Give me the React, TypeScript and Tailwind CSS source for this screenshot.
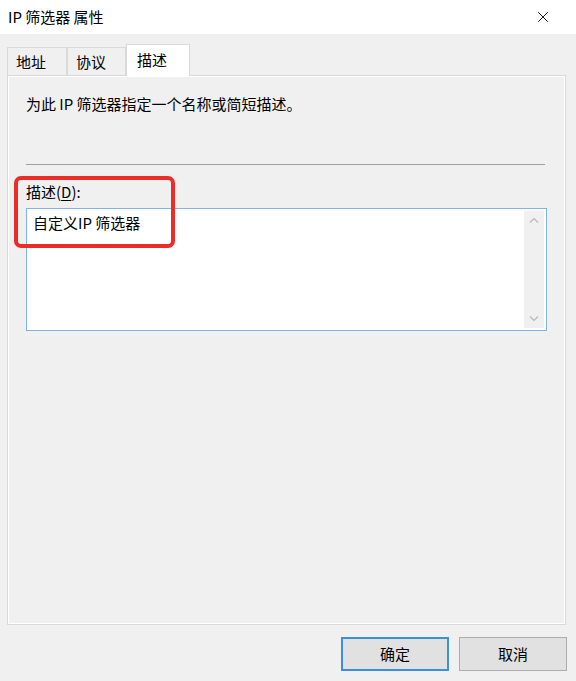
import { X } from 'lucide-react'

const font = { fontFamily: '"Noto Sans CJK SC", "Noto Sans", sans-serif' }

function Tab({ label, active }: { label: string; active?: boolean }) {
  if (active) {
    return (
      <div className="relative z-10 -mb-px flex h-[32px] w-[64px] items-start border border-b-0 border-[#d9d9d9] bg-white pl-[10px] pt-[4px] text-[15px] text-black">
        {label}
      </div>
    )
  }
  return (
    <div className="flex h-[28px] items-start border border-b-0 border-[#d9d9d9] bg-[#f0f0f0] pl-[8px] pr-[10px] pt-[3px] text-[15px] text-black">
      {label}
    </div>
  )
}

function Button({ label, primary }: { label: string; primary?: boolean }) {
  return (
    <button
      className={
        'flex h-[34px] w-[108px] items-center justify-center bg-[#e1e1e1] text-[15px] text-black ' +
        (primary ? 'border-2 border-[#3c8fdb]' : 'border border-[#adadad]')
      }
    >
      {label}
    </button>
  )
}

export default function App() {
  return (
    <div className="flex h-[681px] w-[576px] flex-col bg-[#f0f0f0] text-black" style={font}>
      <div className="flex h-[34px] items-center justify-between bg-white pl-[8px] pr-[24px]">
        <span className="text-[15px]">IP 筛选器 属性</span>
        <X size={18} strokeWidth={1.2} className="text-black" />
      </div>

      <div className="flex flex-1 flex-col px-[7px] pt-[10px]">
        <div className="flex items-end">
          <div className="w-[60px]">
            <Tab label="地址" />
          </div>
          <div className="w-[59px]">
            <Tab label="协议" />
          </div>
          <Tab label="描述" active />
        </div>

        <div className="h-[550px] w-[559px] border border-[#d9d9d9] bg-[#f0f0f0]">
          <div className="relative flex h-full flex-col border border-white px-[17px] pt-[16px]">
            <p className="text-[15px] leading-[22px]">为此 IP 筛选器指定一个名称或简短描述。</p>

            <div className="mt-[49px] h-px w-[519px] bg-[#a0a0a0]" />

            <div className="mt-[16px] text-[15px] leading-[22px]">
              描述(<span className="underline underline-offset-2">D</span>):
            </div>

            <div className="mt-[5px] flex h-[123px] w-[521px] border border-[#7eb4ea] bg-white">
              <div className="flex-1 pl-[6px] pt-[2px] text-[15px] leading-[24px]">自定义IP 筛选器</div>
              <div className="my-[2px] mr-[2px] flex w-[20px] flex-col items-center justify-between bg-[#f0f0f0] py-[6px]">
                <svg width="10" height="6" viewBox="0 0 10 6" fill="none" stroke="#b8b8b8" strokeWidth="1.2">
                  <path d="M1 5.5L5 1.5L9 5.5" />
                </svg>
                <svg width="10" height="6" viewBox="0 0 10 6" fill="none" stroke="#b8b8b8" strokeWidth="1.2">
                  <path d="M1 0.5L5 4.5L9 0.5" />
                </svg>
              </div>
            </div>

            <div className="absolute left-[5px] top-[99px] h-[72px] w-[161px] rounded-[7px] border-[4px] border-[#ec2d27]" />
          </div>
        </div>

        <div className="mt-[12px] flex justify-end gap-[10px] pr-[2px]">
          <Button label="确定" primary />
          <Button label="取消" />
        </div>
      </div>
    </div>
  )
}
